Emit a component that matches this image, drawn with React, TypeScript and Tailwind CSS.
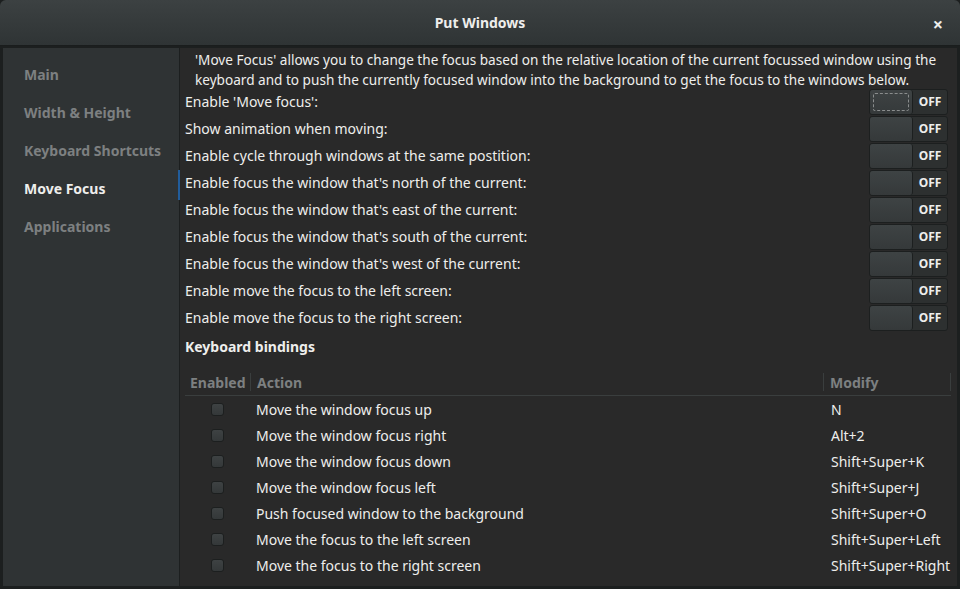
import React from 'react';

const navItems = ['Main', 'Width & Height', 'Keyboard Shortcuts', 'Move Focus', 'Applications'];

const options = [
  "Enable 'Move focus':",
  'Show animation when moving:',
  'Enable cycle through windows at the same postition:',
  "Enable focus the window that's north of the current:",
  "Enable focus the window that's east of the current:",
  "Enable focus the window that's south of the current:",
  "Enable focus the window that's west of the current:",
  'Enable move the focus to the left screen:',
  'Enable move the focus to the right screen:',
];

const bindings: [string, string][] = [
  ['Move the window focus up', 'N'],
  ['Move the window focus right', 'Alt+2'],
  ['Move the window focus down', 'Shift+Super+K'],
  ['Move the window focus left', 'Shift+Super+J'],
  ['Push focused window to the background', 'Shift+Super+O'],
  ['Move the focus to the left screen', 'Shift+Super+Left'],
  ['Move the focus to the right screen', 'Shift+Super+Right'],
];

const Switch: React.FC<{ focused?: boolean }> = ({ focused }) => (
  <div className="flex h-[26px] w-[79px] rounded-[3px] border border-[#1c1f1f] bg-[#2d3030]">
    <div className="relative w-[43px] h-full rounded-[3px] bg-gradient-to-b from-[#3e4344] to-[#35393a] border-r border-[#1c1f1f]">
      {focused && <div className="absolute inset-[3px] border border-dashed border-[#8a8d8d] rounded-[2px]" />}
    </div>
    <div className="flex-1 flex items-center justify-center text-[12px] font-bold text-[#eeeeec]">OFF</div>
  </div>
);

export default function App() {
  return (
    <div
      className="w-[960px] h-[589px] bg-[#1c1f1f] flex flex-col overflow-hidden text-[#eeeeec]"
      style={{ fontFamily: '"Noto Sans", "DejaVu Sans", sans-serif' }}
    >
      {/* title bar */}
      <div className="h-[46px] shrink-0 relative flex items-center justify-center rounded-t-[6px] bg-gradient-to-b from-[#3c4142] to-[#2f3435] border-b border-[#1a1d1d]">
        <span className="text-[14px] font-bold text-[#eeeeec]">Put Windows</span>
        <span className="absolute right-[17px] top-[11px] text-[18px] font-bold text-[#eeeeec]">×</span>
      </div>

      <div className="flex flex-1 min-h-0 px-[3px] pt-[2px] pb-[3px]">
        {/* sidebar */}
        <div className="w-[177px] shrink-0 bg-[#2f3334] border-r border-[#1c1f1f] flex flex-col pt-[7px]">
          {navItems.map((item) => (
            <div
              key={item}
              className={`h-[38px] flex items-center pl-[21px] text-[14px] font-bold ${item === 'Move Focus' ? 'text-[#eeeeec]' : 'text-[#7d8081]'}`}
            >
              {item}
            </div>
          ))}
        </div>

        {/* content */}
        <div className="flex-1 bg-[#292929] flex flex-col pl-[5px] pr-[6px]">
          <p className="pl-[10px] pt-[2px] -mb-[2px] text-[13.6px] leading-[20px] whitespace-nowrap">
            'Move Focus' allows you to change the focus based on the relative location of the current focussed window using the
            <br />
            keyboard and to push the currently focused window into the background to get the focus to the windows below.
          </p>
          <div className="flex flex-col pr-[3px]">
            {options.map((opt, i) => (
              <div key={opt} className="relative h-[27px] flex items-center justify-between">
                {i === 3 && <div className="absolute left-[-7px] top-[1px] w-[2px] h-[30px] bg-[#215d9c]" />}
                <span className="text-[14px]">{opt}</span>
                <Switch focused={i === 0} />
              </div>
            ))}
          </div>

          <div className="mt-[3px] text-[14px] font-bold h-[24px] flex items-center">Keyboard bindings</div>

          <div className="mt-[11px] flex flex-col">
            <div className="h-[27px] flex items-stretch border-b border-[#3a3e3e] text-[14px] font-bold text-[#7d8081]">
              <div className="w-[66px] flex items-center pl-[5px] border-r border-[#3a3e3e] my-[4px]">Enabled</div>
              <div className="w-[573px] flex items-center pl-[6px] border-r border-[#3a3e3e] my-[4px]">Action</div>
              <div className="flex-1 flex items-center pl-[6px] border-r border-[#3a3e3e] my-[4px]">Modify</div>
            </div>
            {bindings.map(([action, key]) => (
              <div key={action} className="h-[26px] flex items-center text-[14px]">
                <div className="w-[64px] flex justify-center">
                  <div className="w-[13px] h-[13px] rounded-[3px] border border-[#1c1f1f] bg-gradient-to-b from-[#3e4243] to-[#343839]" />
                </div>
                <div className="w-[575px] pl-[7px]">{action}</div>
                <div className="flex-1 pl-[7px] whitespace-nowrap">{key}</div>
              </div>
            ))}
          </div>
        </div>
      </div>
    </div>
  );
}
